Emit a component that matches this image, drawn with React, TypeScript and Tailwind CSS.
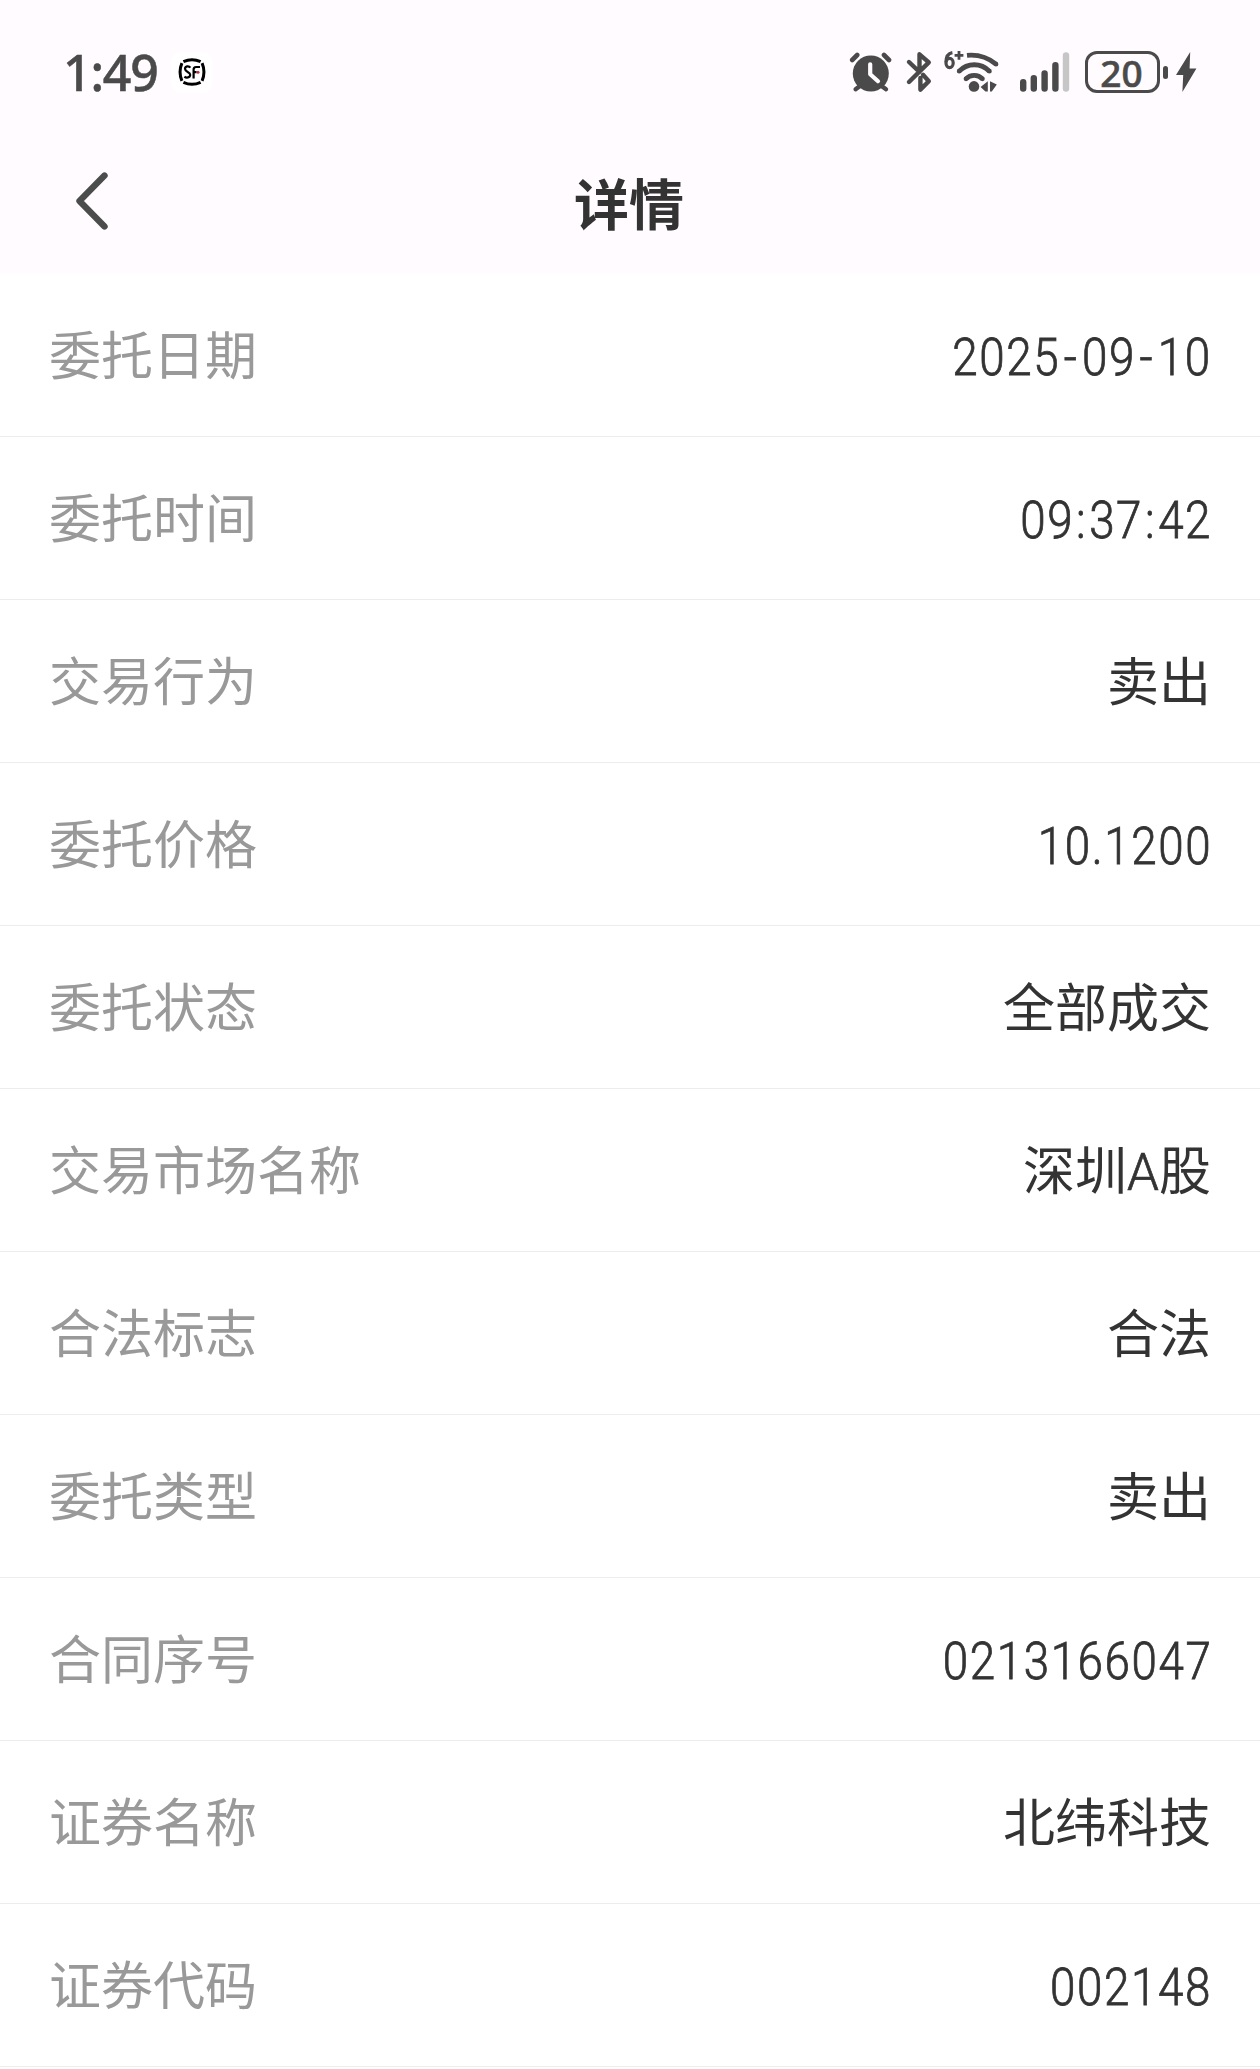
import React from "react";

const INK = "#4a4a4a";

function SfBadge() {
  return (
    <span className="ml-[15px] flex h-[41px] w-[41px] items-center justify-center rounded-[9px] bg-white">
      <svg width="28" height="28" viewBox="0 0 28 28" fill="none">
        <path d="M5.4 3.7Q14 -.3 22.6 3.7" stroke="#000" strokeWidth="3" />
        <path d="M24.1 5.2Q27.8 14 24.1 22.8" stroke="#000" strokeWidth="3" />
        <path d="M22.6 24.3Q14 28.3 5.4 24.3" stroke="#000" strokeWidth="3" />
        <path d="M3.9 22.8Q.2 14 3.9 5.2" stroke="#000" strokeWidth="3" />
        <path d="M12.4 9.6C10.8 7.6 7 8 7 10.8C7 14.2 12.2 13.6 12.2 16.8C12.2 19.8 8.2 20.2 6.4 18.6" stroke="#000" strokeWidth="2.2" />
        <path d="M15.6 20.6V11.6Q15.6 9 18 9H22M15.6 14.2H18.6" stroke="#000" strokeWidth="2.2" />
        <circle cx="20" cy="14.2" r="1.5" fill="#b8323c" />
      </svg>
    </span>
  );
}

function AlarmIcon() {
  return (
    <svg width="44" height="44" viewBox="849 50 44 44" fill="none" stroke={INK} strokeLinecap="round">
      <circle cx="870.8" cy="73.5" r="18" fill={INK} stroke="none" />
      <path d="M852.2 60L857.2 55M889 60L884 55" strokeWidth="4.6" />
      <path d="M860 86L855.6 89.2M881.6 86L886 89.2" strokeWidth="4.4" />
      <path d="M870.2 64.3V74.2L878 81.2" stroke="#fffbff" strokeWidth="4.2" strokeLinejoin="round" />
    </svg>
  );
}

function BluetoothIcon() {
  return (
    <svg className="ml-[12px]" width="28" height="44" viewBox="905 50 28 44" fill="none" stroke={INK} strokeWidth="4.4" strokeLinecap="round" strokeLinejoin="round">
      <path d="M909 62L919.5 72V54.3L928.8 62.4L909 82" />
      <path d="M923 74.8L928.8 81.2L920.4 89.6V78" />
    </svg>
  );
}

function WifiIcon() {
  return (
    <svg className="ml-[10px]" width="56" height="44" viewBox="943 50 56 44" fill="none" stroke={INK} strokeWidth="4.8">
      <path d="M952.4 52.6C947.5 53.5 946 57.5 946 62.2" strokeWidth="3.2" />
      <ellipse cx="949.6" cy="63" rx="3.6" ry="4.6" strokeWidth="3.2" />
      <path d="M954.6 55.4H963.4M959 51V59.8" strokeWidth="2.8" />
      <path d="M967 55.4C978 54.4 988 57.6 996 64.2" />
      <path d="M996 64.2h.01M959.2 71.2h.01M989.4 71.2h.01M966 78.8h.01M982.4 78.8h.01" strokeLinecap="round" />
      <path d="M959.2 71.2C967.5 62.6 981 62.6 989.4 71.2" />
      <path d="M966 78.8C970.2 74.2 978.2 74.2 982.4 78.8" />
      <circle cx="974" cy="86.4" r="5.3" fill={INK} stroke="none" />
      <path d="M987.8 81.3V91.6H985.4L980.6 86.9ZM990 81.3L996.8 84.4L991.8 91.6H990Z" fill={INK} stroke="none" />
    </svg>
  );
}

function SignalIcon() {
  return (
    <svg className="ml-[20px]" width="52" height="44" viewBox="1019 50 52 44" stroke={INK} strokeWidth="6.4" strokeLinecap="round">
      <path d="M1023.2 82.2V88.6M1033.8 78.2V88.6M1044.6 73.4V88.6M1055.4 65.2V88.6" />
      <path d="M1066 55.4V88.6" stroke="#c6c6c6" />
    </svg>
  );
}

function Battery() {
  return (
    <span className="ml-[14px] flex items-center">
      <span className="flex h-[42px] w-[75px] items-center justify-center rounded-[12px] border-[3px] border-[#4a4a4a] pr-[2px] font-['Noto_Sans','Noto_Sans_CJK_SC',sans-serif] text-[37px] leading-none font-medium text-[#4a4a4a] [-webkit-text-stroke:0.6px_#4a4a4a]">
        20
      </span>
      <span className="ml-[3px] h-[13px] w-[5px] rounded-full bg-[#4a4a4a]" />
      <svg className="ml-[7px]" width="22" height="44" viewBox="1175 50 22 44" fill={INK}>
        <path d="M1190.2 52L1176 75H1183.2L1182.4 92L1196.4 68.4H1189.6Z" />
      </svg>
    </span>
  );
}

function StatusBar() {
  return (
    <div className="flex h-[144px] items-center justify-between pr-[63px] pl-[63px]">
      <div className="flex items-center">
        <span className="w-[93px] font-['Noto_Sans','Noto_Sans_CJK_SC',sans-serif] text-[50px] leading-none font-medium tracking-[-1.2px] whitespace-nowrap text-[#4a4a4a] [-webkit-text-stroke:0.5px_#4a4a4a]">
          1:49
        </span>
        <SfBadge />
      </div>
      <div className="flex items-center">
        <AlarmIcon />
        <BluetoothIcon />
        <WifiIcon />
        <SignalIcon />
        <Battery />
      </div>
    </div>
  );
}

function TitleBar() {
  return (
    <div className="grid h-[130px] grid-cols-[1fr_auto_1fr] items-start">
      <button aria-label="返回" className="ml-[73px] pt-[25px]">
        <svg width="38" height="64" viewBox="73 169 38 64" fill="none" stroke="#4b4d4c" strokeWidth="6.4" strokeLinecap="round" strokeLinejoin="round">
          <path d="M104.5 175.6L79.5 201L104.5 226.4" />
        </svg>
      </button>
      <h1 className="pt-[17px] pr-[2px] text-[55px] leading-[80px] font-bold text-[#333]">详情</h1>
    </div>
  );
}

const rows: [string, string][] = [
  ["委托日期", "2025-09-10"],
  ["委托时间", "09:37:42"],
  ["交易行为", "卖出"],
  ["委托价格", "10.1200"],
  ["委托状态", "全部成交"],
  ["交易市场名称", "深圳A股"],
  ["合法标志", "合法"],
  ["委托类型", "卖出"],
  ["合同序号", "0213166047"],
  ["证券名称", "北纬科技"],
  ["证券代码", "002148"],
];

function Value({ text }: { text: string }) {
  if (/^[\d.:-]+$/.test(text)) {
    return (
      <span className="-mr-[1px] origin-right scale-x-[0.88] pt-[9px] font-['Roboto','Noto_Sans_CJK_SC',sans-serif] text-[52px] leading-[76px] font-light tracking-[1.8px] text-[#333] [-webkit-text-stroke:0.8px_#333]">
        {text.split(/([-:.])/).map((part, i) =>
          part === "-" ? (
            <span key={i} className="px-[4px]">{part}</span>
          ) : part === ":" ? (
            <span key={i} className="px-[2.2px]">{part}</span>
          ) : (
            part
          ),
        )}
      </span>
    );
  }
  return (
    <span className="text-[52px] leading-[76px] text-[#333]">
      {text.split(/(A)/).map((part, i) =>
        part === "A" ? (
          <span key={i} className="font-['Roboto',sans-serif] text-[51px] leading-none font-light [-webkit-text-stroke:0.7px_#333]">{part}</span>
        ) : (
          part
        ),
      )}
    </span>
  );
}

export default function App() {
  return (
    <div className="min-h-[2069px] w-[1260px] overflow-hidden bg-white font-['Noto_Sans_CJK_SC',sans-serif]">
      <header className="bg-[#fffbff]">
        <StatusBar />
        <TitleBar />
      </header>
      <dl>
        {rows.map(([label, value]) => (
          <div key={label} className="flex h-[163px] items-center justify-between border-b border-[#ededed] pr-[49px] pb-[4px] pl-[49px]">
            <dt className="text-[52px] leading-[76px] text-[#999]">{label}</dt>
            <dd className="flex">
              <Value text={value} />
            </dd>
          </div>
        ))}
      </dl>
    </div>
  );
}
